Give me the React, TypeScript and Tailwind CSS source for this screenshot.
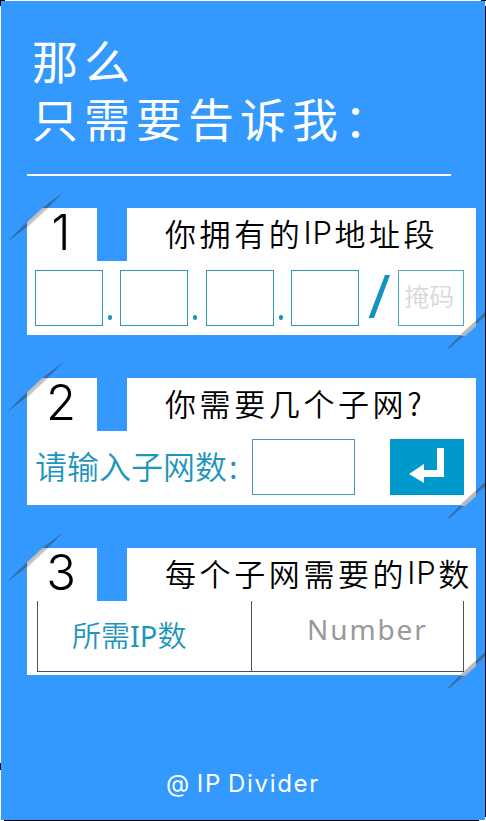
import React from "react";

const CJK = "font-['Noto_Sans_CJK_SC',sans-serif] font-[350]";
const LATIN = "font-['Inter','Noto_Sans_CJK_SC',sans-serif] font-light";

function Corner({ end = false, id }: { end?: boolean; id: string }) {
  if (end) {
    return (
      <svg className="absolute left-[419px] top-[104px]" width="39" height="40" viewBox="0 0 39 40">
        <defs>
          <linearGradient id={id} x1="17.7" y1="17.5" x2="22.3" y2="22.5" gradientUnits="userSpaceOnUse">
            <stop offset="0" stopColor="#333" stopOpacity="0" />
            <stop offset="0.45" stopColor="#333" stopOpacity="0.5" />
            <stop offset="1" stopColor="#777" stopOpacity="0.05" />
          </linearGradient>
        </defs>
        <path d="M30 12V23H17Z" fill="#3399ff" />
        <path d="M1 37L16 21L39 0V6L20 23L4 36Z" fill={`url(#${id})`} />
        <path d="M14 24L30 10V14.5L19 24Z" fill="#c9c7c4" fillOpacity="0.75" />
      </svg>
    );
  }
  return (
    <svg className="absolute -left-5 -top-4" width="58" height="52" viewBox="0 0 58 52">
      <defs>
        <linearGradient id={id} x1="25.7" y1="22.8" x2="30.3" y2="27.8" gradientUnits="userSpaceOnUse">
          <stop offset="0" stopColor="#333" stopOpacity="0" />
          <stop offset="0.5" stopColor="#333" stopOpacity="0.5" />
          <stop offset="1" stopColor="#333" stopOpacity="0" />
        </linearGradient>
      </defs>
      <path d="M20 16H37L20 31Z" fill="#3399ff" />
      <path d="M0 50L18 31L36 15L57 0L38 19L20 35Z" fill={`url(#${id})`} />
      <path d="M20 30L35 16H41L20 36Z" fill="#cfcdca" fillOpacity="0.75" />
    </svg>
  );
}

function Card({ n, title, children }: { n: string; title: React.ReactNode; children: React.ReactNode }) {
  return (
    <section className="relative h-[127px] w-[449px]">
      <header className="flex h-[53px] gap-[30px]">
        <div className={`w-[70px] bg-white pr-[2px] text-center text-[49px] leading-[50px] text-black ${LATIN}`}>{n}</div>
        <h2 className={`flex flex-1 whitespace-nowrap bg-white pl-[38px] text-[31px] leading-[50px] tracking-[3.6px] text-black ${CJK}`}>{title}</h2>
      </header>
      <div className="h-[74px] bg-white">{children}</div>
      <Corner id={`a${n}`} />
      <Corner id={`b${n}`} end />
    </section>
  );
}

const IP = () => <span className={`w-[31px] text-[31px] tracking-[1px] ${LATIN}`}>IP</span>;

const Octet = () => <div className="h-[56px] w-[68px] border border-[#3498b4]" />;
const Dot = () => <div className="mb-[6px] ml-[5px] mr-[8.4px] h-[5px] w-[4px] self-end rounded-full bg-[#1495b4]" />;

export default function App() {
  return (
    <div className="flex h-[821px] w-[486px] flex-col bg-white">
      <div className="flex h-px justify-between">
        <i className="w-[5px] bg-black" />
        <i className="w-[5px] bg-black" />
      </div>
      <div className="flex h-[819px]">
        <div className="flex w-px flex-col">
          <i className="h-[5px] bg-black" />
          <i className="mt-[757px] h-[7px] bg-black" />
        </div>
        <main className="flex h-full w-[484px] flex-col bg-[#3399ff] pl-[26px]">
          <h1 className="h-[173px] whitespace-nowrap pl-[5px] pt-[29px] font-['Noto_Sans_CJK_SC',sans-serif] text-[46px] font-normal leading-[58px] tracking-[6px] text-white">
            <span className="block">那么</span>
            <span className="block">只需要告诉我：</span>
          </h1>
          <div className="h-[2px] w-[424px] bg-white" />
          <div className="mt-[32px] flex flex-col gap-[43px]">
            <Card n="1" title={<>你拥有的<IP />地址段</>}>
              <div className="flex pl-[8px] pt-[9px]">
                <Octet /><Dot /><Octet /><Dot /><Octet /><Dot /><Octet />
                <svg className="ml-[8px] mt-[4px]" width="24" height="46" viewBox="0 0 24 46">
                  <path d="M18 1H23L7 44H1.5Z" fill="#1292c0" />
                </svg>
                <div className={`ml-[7px] h-[56px] w-[66px] whitespace-nowrap border border-[#4aa9c9] pl-[5px] text-[25px] leading-[48px] text-[#d9d9d9] ${CJK}`}>掩码</div>
              </div>
            </Card>
            <Card n="2" title="你需要几个子网?">
              <div className={`flex pl-[8px] pt-[8px] text-[32px] text-[#1e95bd] ${CJK}`}>
                <div className="w-[217px] whitespace-nowrap leading-[53px]">请输入子网数<span className="pl-[2px]">:</span></div>
                <div className="h-[56px] w-[103px] border border-[#4499ad]" />
                <div className="ml-[35px] h-[56px] w-[74px] bg-[#0099cc]">
                  <svg width="74" height="56" viewBox="0 0 74 56">
                    <path d="M47 9H54V38H34V44L19 35L34 25V31H47Z" fill="#fff" />
                  </svg>
                </div>
              </div>
            </Card>
            <Card n="3" title={<>每个子网需要的<IP />数</>}>
              <div className="ml-[10px] flex h-[71px] w-[427px] border-x border-b border-[#4c5150]">
                <div className={`w-[214px] whitespace-nowrap border-r border-[#4c5150] pl-[34px] text-[29px] leading-[67px] text-[#1e95bd] ${CJK}`}>
                  所需<span className="font-['Noto_Sans',sans-serif] font-normal">IP</span>数
                </div>
                <div className="pl-[55px] font-['Noto_Sans',sans-serif] text-[28px] leading-[57px] tracking-[1.9px] text-[#999]">Number</div>
              </div>
            </Card>
          </div>
          <footer className="mt-[90px] pl-[139px] font-['Inter',sans-serif] text-[24px] font-normal leading-[38px] tracking-[1.7px] text-white [word-spacing:-2.5px]">@ IP Divider</footer>
        </main>
        <div className="mt-[5px] h-[811px] w-px bg-black" />
      </div>
      <div className="ml-[4px] h-px w-[475px] bg-black" />
    </div>
  );
}
